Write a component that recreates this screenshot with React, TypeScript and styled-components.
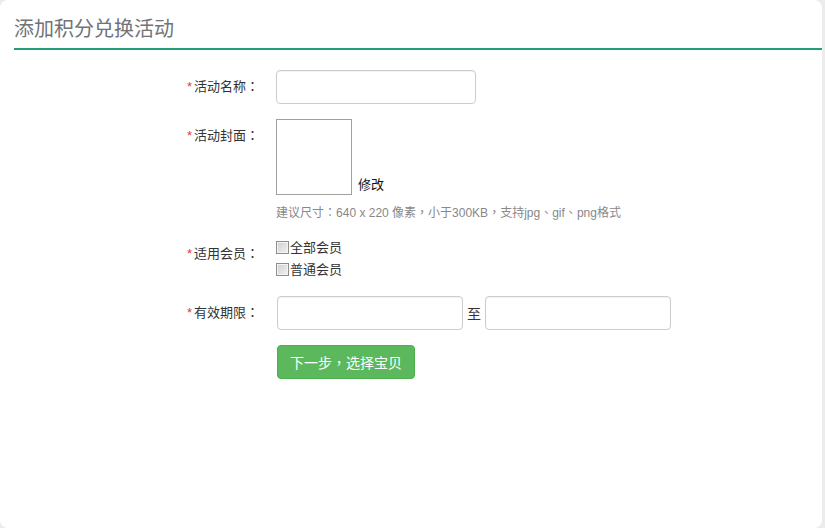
import { ReactNode } from "react";
import styled, { createGlobalStyle } from "styled-components";

const GlobalStyle = createGlobalStyle`
  html, body {
    margin: 0;
    padding: 0;
    background: #ececec;
  }
  body {
    font-family: "Liberation Sans", "Noto Sans CJK SC", sans-serif;
    font-size: 13px;
    color: #333;
  }
  * {
    box-sizing: border-box;
  }
`;

type RowProps = {
  label: string;
  children: ReactNode;
};

// 폼 한 줄: 라벨 + 컨트롤
function FormRow({ label, children }: RowProps) {
  return (
    <Row>
      <Label>
        <Star>*</Star>
        {label}
        <Punct>：</Punct>
      </Label>
      <Control>{children}</Control>
    </Row>
  );
}

function App() {
  const members = ["全部会员", "普通会员"];

  return (
    <>
      <GlobalStyle />
      <Panel>
        <Header>
          <Title>添加积分兑换活动</Title>
        </Header>

        <Form>
          <FormRow label="活动名称">
            <TextInput width={200} />
          </FormRow>

          <FormRow label="活动封面">
            <CoverLine>
              <CoverBox />
              <EditLink>修改</EditLink>
            </CoverLine>
            <Hint>
              建议尺寸<Punct>：</Punct>640 x 220 像素<Punct>，</Punct>小于300KB
              <Punct>，</Punct>支持jpg<Punct>、</Punct>gif<Punct>、</Punct>png格式
            </Hint>
          </FormRow>

          <FormRow label="适用会员">
            <CheckList>
              {members.map((name) => (
                <CheckItem key={name}>
                  <CheckBox />
                  {name}
                </CheckItem>
              ))}
            </CheckList>
          </FormRow>

          <FormRow label="有效期限">
            <DateRange>
              <TextInput width={186} />
              <RangeSep>至</RangeSep>
              <TextInput width={186} />
            </DateRange>
          </FormRow>

          <Row>
            <span />
            <Control>
              <SubmitButton type="button">
                下一步<Punct>，</Punct>选择宝贝
              </SubmitButton>
            </Control>
          </Row>
        </Form>
      </Panel>
    </>
  );
}

export default App;

// Style
const Panel = styled.div`
  width: 822px;
  height: 528px;
  background: #fff;
  border-radius: 8px;
  overflow: hidden;
`;

const Header = styled.div`
  margin-left: 14px;
  height: 50px;
  padding-top: 14px;
  border-bottom: 2px solid #22a07c;
`;

const Title = styled.h1`
  margin: 0;
  font-size: 20px;
  line-height: 28px;
  font-weight: normal;
  color: #707378;
  font-family: "Noto Sans CJK SC", sans-serif;
`;

const Form = styled.div`
  padding-top: 20px;
  display: flex;
  flex-direction: column;
  gap: 15px;
`;

const Row = styled.div`
  display: grid;
  grid-template-columns: 259px 1fr;
  column-gap: 17px;
  align-items: start;
`;

const Label = styled.div`
  height: 34px;
  text-align: right;
  line-height: 34px;
  font-size: 13px;
  color: #333;
  white-space: nowrap;
`;

const Star = styled.span`
  color: #e4393c;
  margin-right: 2px;
`;

// 중국어 구두점을 가운데 정렬 글꼴로
const Punct = styled.span`
  font-family: "Noto Sans CJK TC", sans-serif;
  line-height: 1;
`;

const Control = styled.div`
  display: flex;
  flex-direction: column;
`;

const TextInput = styled.input<{ width: number }>`
  width: ${(p) => p.width}px;
  height: 34px;
  border: 1px solid #ccc;
  border-radius: 4px;
  background: #fff;
  box-shadow: inset 0 1px 1px rgba(0, 0, 0, 0.05);
  outline: none;
`;

const CoverLine = styled.div`
  display: flex;
  align-items: flex-end;
  gap: 6px;
`;

const CoverBox = styled.div`
  width: 76px;
  height: 76px;
  border: 1px solid #a0a0a0;
  background: #fff;
`;

const EditLink = styled.span`
  font-size: 13px;
  line-height: 16px;
  color: #111;
  margin-bottom: 2px;
`;

const Hint = styled.div`
  margin-top: 9px;
  height: 18px;
  font-size: 12px;
  line-height: 18px;
  color: #888;
`;

const CheckList = styled.div`
  display: flex;
  flex-direction: column;
`;

const CheckItem = styled.label`
  display: flex;
  align-items: center;
  height: 22px;
  font-size: 13px;
  line-height: 18px;
  color: #333;
`;

const CheckBox = styled.span`
  width: 13px;
  height: 13px;
  margin-right: 1px;
  margin-top: -1px;
  border: 1px solid #8e8e8e;
  box-shadow: inset 0 0 0 1px #f4f4f4;
  background: linear-gradient(135deg, #cfcfcf, #f2f2f2);
`;

const DateRange = styled.div`
  display: flex;
  align-items: center;
  padding-left: 1px;
`;

const RangeSep = styled.span`
  margin: 0 4px;
  font-size: 14px;
  color: #333;
`;

const SubmitButton = styled.button`
  align-self: flex-start;
  margin-left: 1px;
  height: 34px;
  padding: 0 12px;
  border: 1px solid #4cae4c;
  border-radius: 4px;
  background: #5cb85c;
  color: #fff;
  font-family: "Liberation Sans", "Noto Sans CJK SC", sans-serif;
  font-size: 14px;
  cursor: pointer;
`;
